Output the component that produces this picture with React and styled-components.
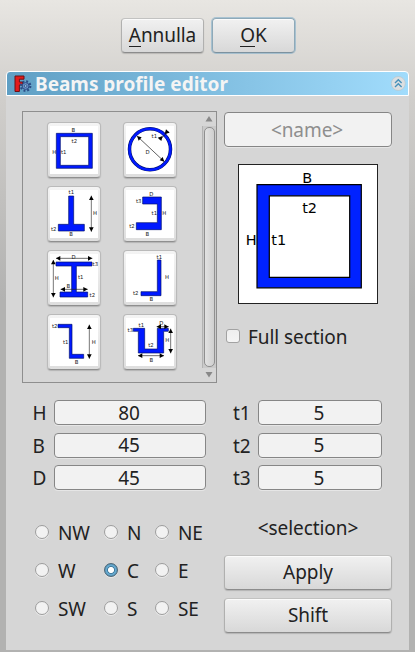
import React, { useState } from "react";
import styled, { createGlobalStyle, css } from "styled-components";

const GlobalStyle = createGlobalStyle`
  * { box-sizing: border-box; }
  body {
    margin: 0;
    background: #b2b1b0;
    color: #222;
    font-family: "Noto Sans", sans-serif;
    font-size: 19px;
    line-height: 26px;
    letter-spacing: -0.07px;
  }
`;

const Page = styled.div`
  width: 415px;
  height: 652px;
  overflow: hidden;
  display: flex;
  flex-direction: column;
  background: linear-gradient(#e8e6e2 0, #d0cecb 100px, #b2b2b1 300px);
`;

const DialogButtons = styled.div`
  display: flex;
  gap: 8px;
  height: 71px;
  padding: 18px 0 0 121px;
`;

const Button = styled.button`
  display: flex;
  align-items: center;
  justify-content: center;
  width: ${(p) => p.$width}px;
  height: 35px;
  padding: 0;
  border: 1px solid #b0b0af;
  border-top-color: #c2c2c1;
  border-bottom-color: #8c8c8c;
  border-radius: 4px;
  background: linear-gradient(#f1f1f1, #d8d8d8);
  box-shadow: inset 0 1px 0 #fbfbfb, 0 1px 1px rgba(0, 0, 0, 0.16);
  color: #222;
  font: inherit;
  letter-spacing: inherit;
  line-height: 27px;
  ${(p) =>
    p.$default &&
    css`
      border-color: #8ea9b8;
      border-bottom-color: #7c929f;
      box-shadow: inset 0 1px 0 #fbfbfb, 0 0 0 1px rgba(120, 170, 200, 0.55);
    `}
`;

const Mnemonic = styled.span`
  height: 27px;
  background: linear-gradient(#222, #222) 0 24px / 100% 1px no-repeat;
`;

const Panel = styled.section`
  width: 403px;
  height: 579px;
  margin-left: 6px;
  display: flex;
  flex-direction: column;
`;

const TitleBar = styled.header`
  display: flex;
  align-items: center;
  height: 25px;
  padding: 0 2px 0 7px;
  border: 1px solid #fff;
  border-radius: 4px 4px 0 0;
  background: linear-gradient(90deg, #5f9fc4, #a1dcfc);
`;

const Title = styled.h1`
  flex: 1;
  align-self: flex-start;
  margin: 0 0 0 3px;
  height: 20px;
  overflow: hidden;
  color: #f4f4f4;
  font-size: 19px;
  line-height: 24px;
  font-weight: 700;
  letter-spacing: 0;
`;

const Body = styled.div`
  flex: 1;
  padding: 15px 17px 0 16px;
  background: #d6d6d6;
`;

const Columns = styled.div`
  display: flex;
  justify-content: space-between;
`;

const ProfileList = styled.div`
  display: flex;
  justify-content: space-between;
  width: 195px;
  height: 272px;
  border: 1px solid #8e8e8e;
`;

const Tiles = styled.div`
  display: grid;
  grid-template-columns: 54px 54px;
  grid-auto-rows: 56px;
  gap: 8px 22px;
  padding: 10px 0 0 24px;
`;

const Tile = styled.button`
  padding: 0;
  border: 1px solid #bababa;
  border-bottom-color: #8f8f8f;
  border-radius: 4px;
  background: linear-gradient(#fff, #fff) 2px 3px / 48px 48px no-repeat,
    linear-gradient(#f4f4f4, #dedede);
  box-shadow: 0 1px 1px rgba(0, 0, 0, 0.16);
  svg {
    display: block;
    margin: -1px;
  }
`;

const ScrollBar = styled.div`
  display: flex;
  flex-direction: column;
  align-items: center;
  width: 14px;
  > svg { display: block; flex: none; }
`;

const Groove = styled.div`
  flex: 1;
  width: 14px;
  padding: 1px;
  border-left: 1px solid #b3b3b3;
  background: #cacaca;
`;

const Thumb = styled.div`
  width: 11px;
  height: 100%;
  border: 1px solid #8f8f8f;
  border-radius: 5px;
  background: linear-gradient(90deg, #e2e2e2, #cfcfcf);
`;

const Side = styled.div`
  width: 168px;
  display: flex;
  flex-direction: column;
  align-items: flex-start;
  padding-top: 1px;
`;

const Field = styled.input`
  display: block;
  width: ${(p) => p.$width}px;
  height: ${(p) => p.$height || 25}px;
  padding: 0 2px 0 0;
  border: 1px solid #868686;
  border-radius: 4px;
  outline: 0;
  background: #f2f2f2;
  box-shadow: 0 1px 0 #e6e6e6;
  color: #222;
  font: inherit;
  letter-spacing: inherit;
  text-align: center;
  &::placeholder { color: #8e8e8e; opacity: 1; }
`;

const Preview = styled.div`
  width: 140px;
  height: 140px;
  margin: 17px 0 0 14px;
  border: 1px solid #222;
  background: #fff;
  svg { display: block; }
`;

const CheckLabel = styled.label`
  display: flex;
  align-items: center;
  gap: 8px;
  margin: 20px 0 0 2px;
`;

const CheckBox = styled.span`
  width: 14px;
  height: 14px;
  margin-top: -2px;
  border: 1px solid #a2a2a2;
  border-radius: 3px;
  background: linear-gradient(#eee, #f4f4f4);
`;

const Dimensions = styled.div`
  display: grid;
  grid-template-columns: 32px 152px 52px 124px;
  grid-auto-rows: 25px;
  row-gap: 7.5px;
  margin-top: 17px;
`;

const DimLabel = styled.label`
  line-height: 26px;
  padding-left: ${(p) => p.$indent}px;
`;

const Bottom = styled.div`
  display: flex;
  justify-content: space-between;
  margin-top: 23px;
`;

const Anchors = styled.div`
  display: grid;
  grid-template-columns: 69px 51px 60px;
  grid-auto-rows: 38px;
  padding-left: 13px;
`;

const RadioLabel = styled.label`
  display: flex;
  align-items: center;
  gap: 9px;
  height: 38px;
  padding-top: 1px;
`;

const Radio = styled.span`
  flex: none;
  width: 14px;
  height: 14px;
  margin-top: -2px;
  border: 1px solid #9c9c9c;
  border-radius: 50%;
  background: #f2f2f2;
  box-shadow: 0 1px 0 #e8e8e8;
  ${(p) =>
    p.$checked &&
    css`
      border-color: #4c6778;
      background: radial-gradient(circle, #fff 0 2.7px, #3c7596 3.4px, #66a9cf 4.3px 5px, #5590b2 6px);
    `}
`;

const Actions = styled.div`
  width: 168px;
  display: flex;
  flex-direction: column;
  gap: 8px;
`;

const Selection = styled.div`
  height: 34px;
  line-height: 30px;
  text-align: center;
`;

const head = {
  l: "0,0 13,-7 13,7",
  r: "0,0 -13,-7 -13,7",
  u: "0,0 -7,13 7,13",
  d: "0,0 -7,-13 7,-13",
};

function Head({ x, y, dir }) {
  return <polygon points={head[dir]} transform={`translate(${x} ${y})`} fill="#000" />;
}

function HArrow({ x1, x2, y }) {
  return (
    <g>
      <path d={`M${x1} ${y}H${x2}`} stroke="#222" strokeWidth="2" />
      <Head x={x1} y={y} dir="l" />
      <Head x={x2} y={y} dir="r" />
    </g>
  );
}

function VArrow({ y1, y2, x }) {
  return (
    <g>
      <path d={`M${x} ${y1}V${y2}`} stroke="#333" strokeWidth="2" />
      <Head x={x} y={y1} dir="u" />
      <Head x={x} y={y2} dir="d" />
    </g>
  );
}

const profiles = [
  {
    name: "Square tube",
    shape: "M28 34H136V139H28ZM40 44V130H125V44Z",
    labels: [["B", 79, 31], ["t2", 82, 62], ["H", 22, 95], ["t1", 50, 95]],
  },
  {
    name: "Round tube",
    extra: (
      <g>
        <circle cx="81" cy="82" r="61.5" fill="none" stroke="#001060" strokeWidth="10.5" />
        <circle cx="81" cy="82" r="61.5" fill="none" stroke="#0019ff" strokeWidth="7.5" />
        <path d="M43 43L123 118M110 54L136 28" stroke="#111" strokeWidth="2" />
        <path d="M42 42l14 4-9 10zM124 119l-14-4 9-10zM119 42l-4 15-11-10zM125 36l4-14 11 10z" />
      </g>
    ),
    labels: [["t1", 94, 47], ["D", 74, 96]],
  },
  {
    name: "T section",
    shape: "M65 30H80V115H112V135H34V115H65Z",
    labels: [["t1", 73, 24], ["t2", 20, 134], ["B", 72, 151], ["H", 144, 86]],
    extra: <VArrow x={133} y1={29} y2={137} />,
  },
  {
    name: "C section",
    shape: "M59 33H115V131H40V110H103V54H59Z",
    labels: [["D", 85, 29], ["t3", 47, 50], ["t1", 94, 88], ["H", 124, 88], ["t2", 27, 127], ["B", 73, 149]],
  },
  {
    name: "I section",
    shape: "M27 36H135V48H88V126H122V141H39V126H74V48H27Z",
    labels: [["D", 80, 26], ["t3", 145, 47], ["H", 29, 89], ["t1", 101, 86], ["B", 64, 114], ["t2", 136, 141]],
    extra: (
      <g>
        <HArrow x1={27} x2={136} y={25} />
        <HArrow x1={41} x2={122} y={118} />
        <VArrow x={19} y1={30} y2={142} />
      </g>
    ),
  },
  {
    name: "L section",
    shape: "M103 30H114V137H54V125H103Z",
    labels: [["t1", 109, 26], ["H", 132, 86], ["t2", 38, 136], ["B", 85, 153]],
  },
  {
    name: "Z section",
    shape: "M33 31H75V121H110V133H67V41H33Z",
    labels: [["t2", 23, 43], ["t1", 56, 90], ["B", 89, 149], ["H", 140, 90]],
    extra: <VArrow x={127} y1={32} y2={134} />,
  },
  {
    name: "Omega section",
    shape: "M31 43H65V105H103V43H136V52H122V117H46V52H31Z",
    labels: [["t3", 22, 55], ["t1", 55, 38], ["D", 115, 33], ["H", 133, 84], ["t2", 84, 98], ["B", 85, 144]],
    extra: (
      <g>
        <HArrow x1={101} x2={137} y={38} />
        <HArrow x1={45} x2={123} y={125} />
        <VArrow x={143} y1={44} y2={118} />
      </g>
    ),
  },
];

function ProfileIcon({ profile }) {
  return (
    <svg width="54" height="56" viewBox="0 0 162 168">
      {profile.shape && (
        <path d={profile.shape} fill="#0019ff" stroke="#001068" strokeWidth="2" fillRule="evenodd" />
      )}
      {profile.extra}
      <g fontFamily="DejaVu Sans, sans-serif" fontSize="16" fill="#222" textAnchor="middle">
        {profile.labels.map(([text, x, y]) => (
          <text key={text} x={x} y={y}>{text}</text>
        ))}
      </g>
    </svg>
  );
}

function PreviewDrawing() {
  return (
    <svg width="138" height="138" viewBox="0 0 138 138">
      <path
        d="M18 19.7H122.3V122.8H18ZM30.3 30.8V112.4H110.7V30.8Z"
        fill="#0022ff" stroke="#000" strokeWidth="1.2" fillRule="evenodd"
      />
      <g fontFamily="DejaVu Sans, sans-serif" fontSize="14.5" fill="#000">
        <text x="63.2" y="17.7">B</text>
        <text x="63.2" y="48">t2</text>
        <text x="6.8" y="80">H</text>
        <text x="32.3" y="80">t1</text>
      </g>
    </svg>
  );
}

function AppIcon() {
  return (
    <svg width="18" height="19" viewBox="0 0 18 19">
      <path d="M1 2H10V5.2H5.4V8H8.6V11H5.4V17.5H1Z" fill="#e41a1a" stroke="#6d1015" strokeWidth="1" />
      <circle cx="11.6" cy="12" r="4.7" fill="none" stroke="#2c4c86" strokeWidth="2.2" strokeDasharray="1.9 1.79" />
      <circle cx="11.6" cy="12" r="3.4" fill="#6d94c8" stroke="#2c4c86" strokeWidth="1" />
      <circle cx="11.6" cy="12" r="1.4" fill="#8fbfe0" stroke="#2c4c86" strokeWidth="0.8" />
    </svg>
  );
}

function CollapseIcon() {
  return (
    <svg width="15" height="15" viewBox="0 0 15 15">
      <circle cx="7.3" cy="7.5" r="7" fill="#dcdfe1" stroke="#b5c5ce" strokeWidth="0.7" />
      <path d="M4 7L7.3 3.8L10.6 7M4 11L7.3 7.8L10.6 11" fill="none" stroke="#4690b9" strokeWidth="1.4" />
    </svg>
  );
}

const dimensions = [
  ["H", "80", "t1", "5"],
  ["B", "45", "t2", "5"],
  ["D", "45", "t3", "5"],
];

const anchors = ["NW", "N", "NE", "W", "C", "E", "SW", "S", "SE"];

export default function App() {
  const [anchor, setAnchor] = useState("C");
  return (
    <Page>
      <GlobalStyle />
      <DialogButtons>
        <Button $width={83}><Mnemonic>A</Mnemonic>nnulla</Button>
        <Button $width={83} $default><Mnemonic>O</Mnemonic>K</Button>
      </DialogButtons>
      <Panel>
        <TitleBar>
          <AppIcon />
          <Title>Beams profile editor</Title>
          <CollapseIcon />
        </TitleBar>
        <Body>
          <Columns>
            <ProfileList>
              <Tiles>
                {profiles.map((p) => (
                  <Tile key={p.name} aria-label={p.name}><ProfileIcon profile={p} /></Tile>
                ))}
              </Tiles>
              <ScrollBar>
                <svg width="14" height="14"><path d="M3.5 9.5L7 4L10.5 9.5Z" fill="#888" /></svg>
                <Groove><Thumb /></Groove>
                <svg width="14" height="14"><path d="M3.5 4L7 9.5L10.5 4Z" fill="#888" /></svg>
              </ScrollBar>
            </ProfileList>
            <Side>
              <Field $width={168} $height={35} placeholder="<name>" />
              <Preview><PreviewDrawing /></Preview>
              <CheckLabel><CheckBox />Full section</CheckLabel>
            </Side>
          </Columns>
          <Dimensions>
            {dimensions.map(([a, av, b, bv]) => (
              <React.Fragment key={a}>
                <DimLabel $indent={10.5}>{a}</DimLabel>
                <Field $width={152} defaultValue={av} />
                <DimLabel $indent={27}>{b}</DimLabel>
                <Field $width={124} defaultValue={bv} />
              </React.Fragment>
            ))}
          </Dimensions>
          <Bottom>
            <Anchors>
              {anchors.map((a) => (
                <RadioLabel key={a} onClick={() => setAnchor(a)}>
                  <Radio $checked={a === anchor} />{a}
                </RadioLabel>
              ))}
            </Anchors>
            <Actions>
              <Selection>&lt;selection&gt;</Selection>
              <Button $width={168}>Apply</Button>
              <Button $width={168}>Shift</Button>
            </Actions>
          </Bottom>
        </Body>
      </Panel>
    </Page>
  );
}
